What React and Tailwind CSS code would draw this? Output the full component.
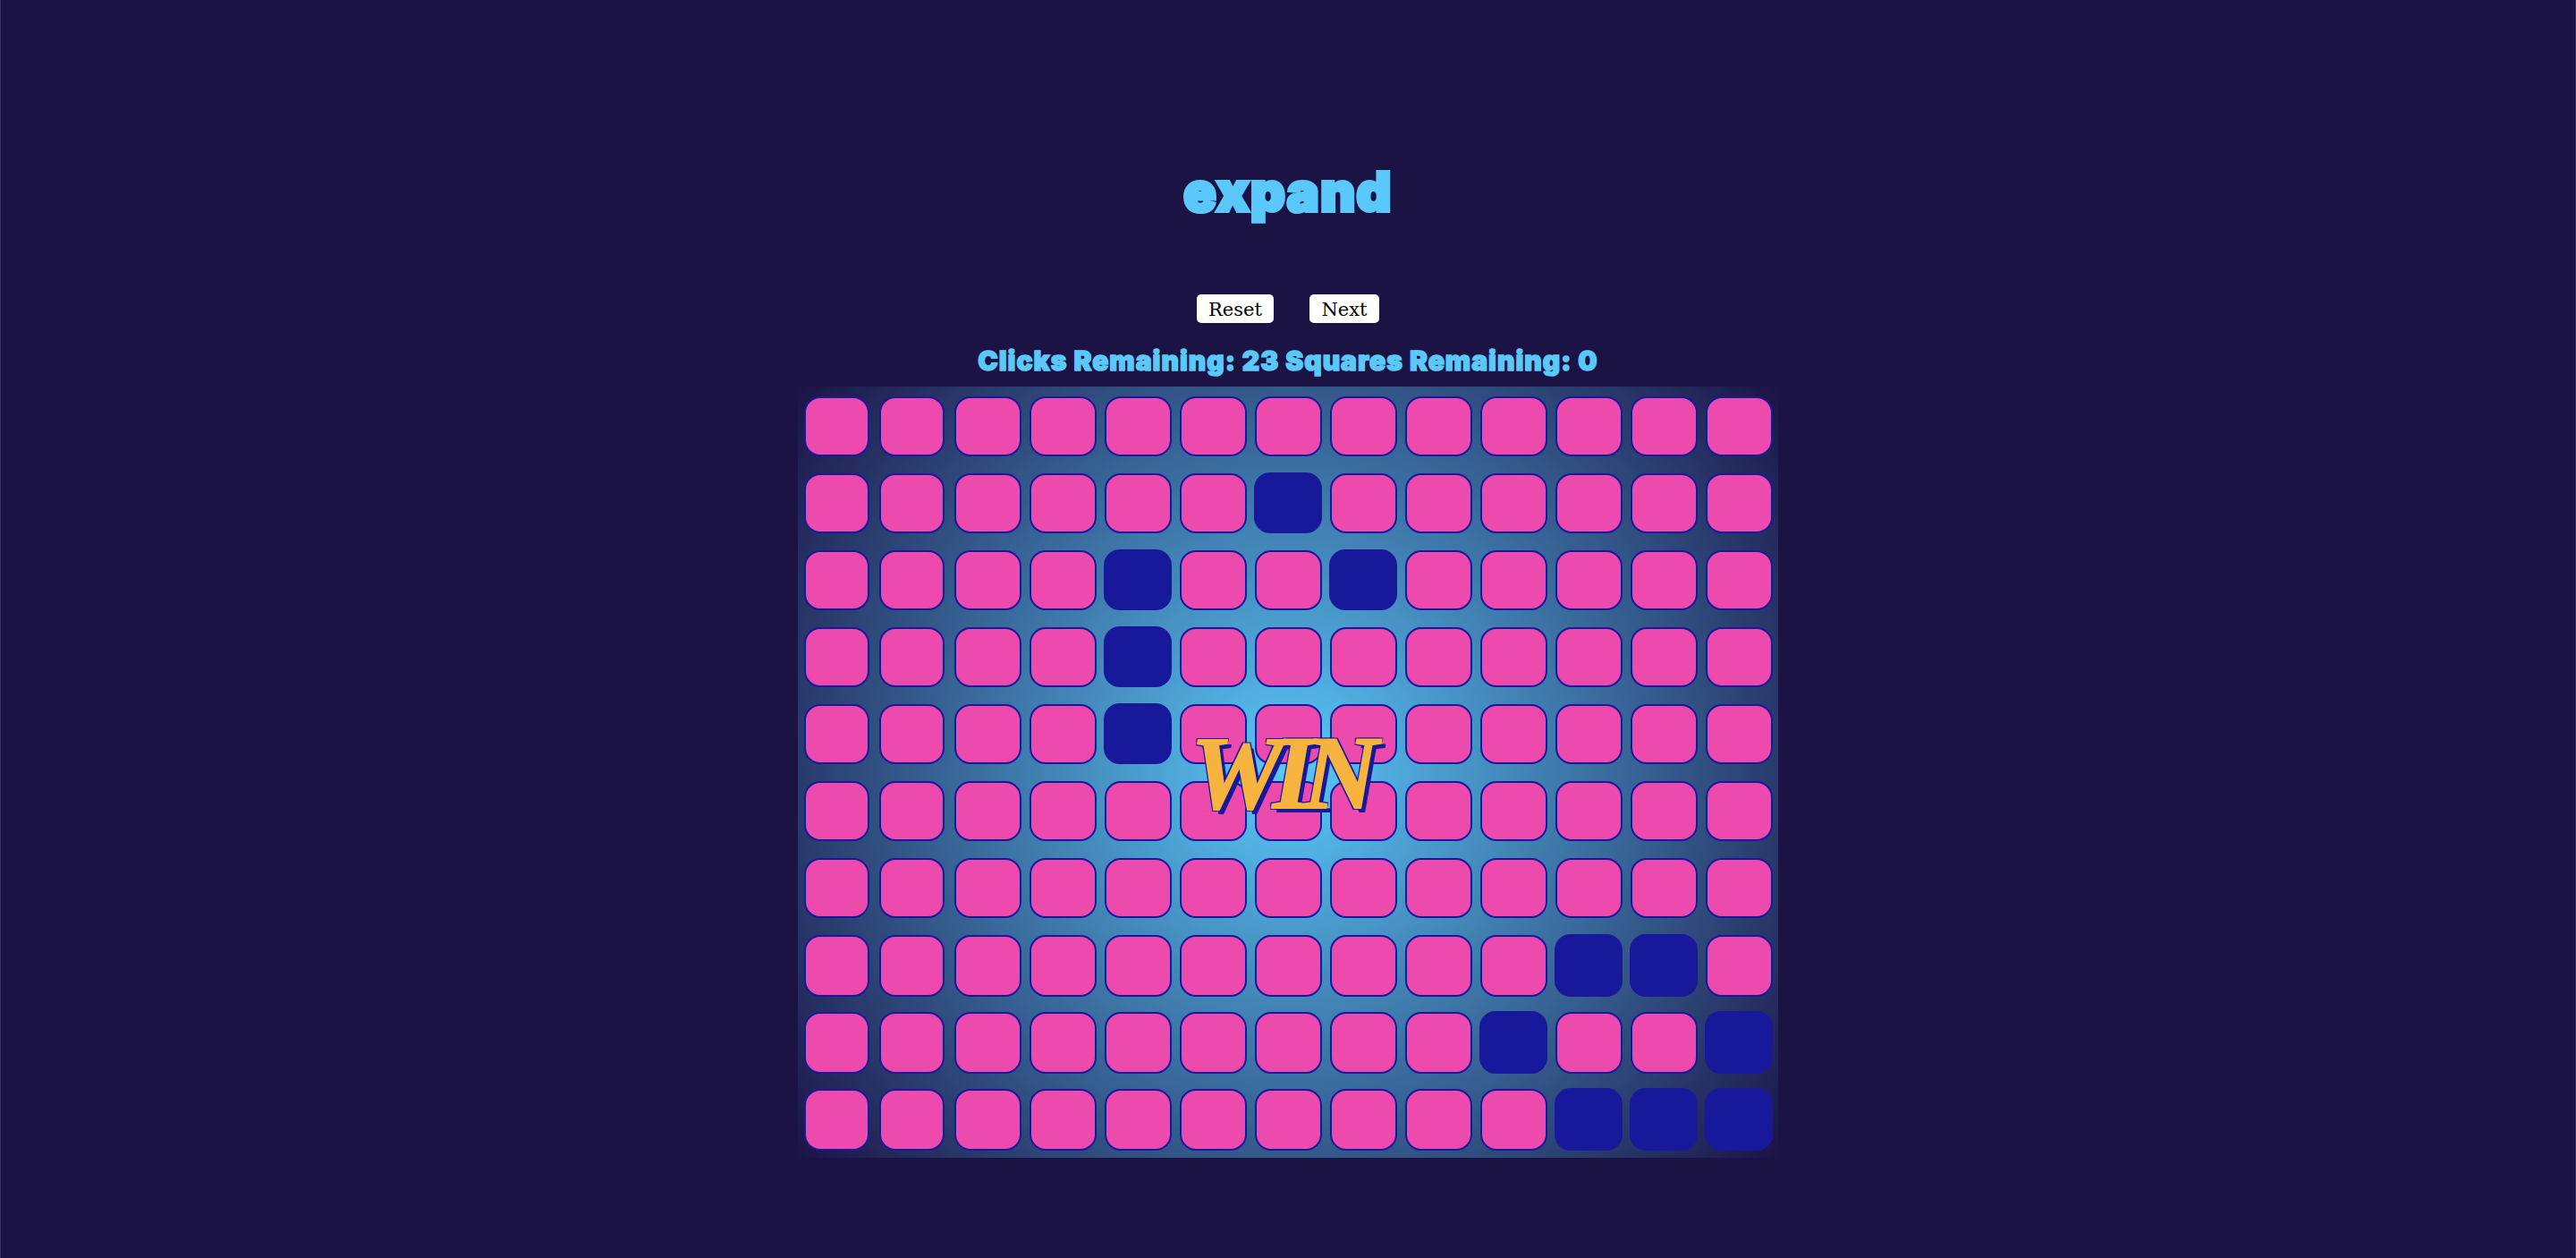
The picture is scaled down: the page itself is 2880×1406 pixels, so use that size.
import React from "react";

// "." pink square still on, "#" cleared square
const board = [
  ".............",
  "......#......",
  "....#..#.....",
  "....#........",
  "....#........",
  ".............",
  ".............",
  "..........##.",
  ".........#..#",
  "..........###",
];

function Square({ cleared, row, col }) {
  const tall = row >= 7;
  if (cleared) {
    return (
      <div
        className={`w-[76px] rounded-[18px] bg-[#18189a] ${tall ? "h-[70px]" : "h-[68px]"}`}
      />
    );
  }
  return (
    <div
      className={`m-[0.5px] rounded-[18px] border-2 border-[#18189a] bg-[#ec4aac] ${
        col < 2 ? "w-[73px]" : "w-[75px]"
      } ${tall ? "h-[69px]" : "h-[67px]"}`}
    />
  );
}

export default function App() {
  return (
    <div className="flex min-h-[1406px] flex-col items-center border-x border-[#38325f] bg-[#1c1345] font-['Inter',sans-serif]">
      <h1 className="mt-[175px] h-[81px] text-[60px] leading-[78px] font-black tracking-[1.5px] text-[#5ac8fa] [-webkit-text-stroke:4px_#5ac8fa] [paint-order:stroke]">
        expand
      </h1>

      {/* Buttons */}
      <div className="mt-[73px] flex gap-10">
        <button className="h-8 w-[86px] rounded-[5px] bg-white pt-px font-['DejaVu_Serif',serif] text-[21px] leading-8 text-black">
          Reset
        </button>
        <button className="h-8 w-[78px] rounded-[5px] bg-white pt-px font-['DejaVu_Serif',serif] text-[21px] leading-8 text-black">
          Next
        </button>
      </div>

      <p className="mt-[22px] h-[49px] text-[30px] leading-10 font-black tracking-[1px] whitespace-nowrap text-[#5ac8fa] [-webkit-text-stroke:1.5px_#5ac8fa]">
        Clicks Remaining: 23 Squares Remaining: 0
      </p>

      {/* Board */}
      <div className="relative grid h-[862px] w-[1096px] grid-cols-[repeat(13,76px)] auto-rows-[70px] gap-x-2 gap-y-4 bg-[radial-gradient(circle,#5ac8fa,#1c1345)] px-1.5 pt-2.5 pb-2">
        {board.map((line, row) =>
          line
            .split("")
            .map((c, col) => (
              <Square key={`${row}-${col}`} cleared={c === "#"} row={row} col={col} />
            )),
        )}
        <div className="absolute inset-0 flex items-center justify-center">
          <span className="mr-5 font-['Liberation_Serif',serif] text-[117px] leading-none font-bold tracking-[-12px] text-[#f6b33f] italic [-webkit-text-stroke:2px_#f6b33f] [text-shadow:5px_5px_0_#18189a,-2px_-2px_0_#18189a,2px_-2px_0_#18189a,-2px_2px_0_#18189a]">
            WIN
          </span>
        </div>
      </div>
    </div>
  );
}
